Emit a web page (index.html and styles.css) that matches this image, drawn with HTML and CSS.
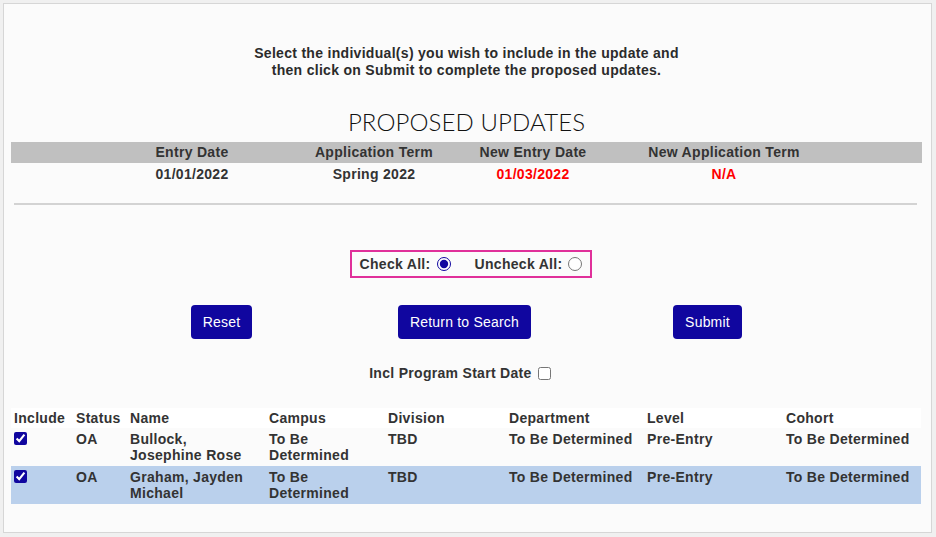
FILE: index.html
```html
<!DOCTYPE html>
<html>
<head>
<meta charset="utf-8">
<link rel="stylesheet" href="styles.css">
</head>
<body>
<div class="panel">
  <p class="intro">Select the individual(s) you wish to include in the update and<br>then click on Submit to complete the proposed updates.</p>
  <h1 class="title">PROPOSED UPDATES</h1>
  <div class="summary">
    <div class="summary-head">
      <span></span><span>Entry Date</span><span>Application Term</span><span>New Entry Date</span><span>New Application Term</span>
    </div>
    <div class="summary-row">
      <span></span><span>01/01/2022</span><span>Spring 2022</span><span class="red">01/03/2022</span><span class="red">N/A</span>
    </div>
  </div>
  <hr class="rule">
  <div class="check-wrap">
    <div class="check-box">
      <label class="opt">Check All: <input type="radio" name="ca" checked></label>
      <label class="opt">Uncheck All: <input type="radio" name="ca"></label>
    </div>
  </div>
  <div class="buttons">
    <button class="btn">Reset</button>
    <button class="btn">Return to Search</button>
    <button class="btn">Submit</button>
  </div>
  <div class="incl">
    <label>Incl Program Start Date <input type="checkbox"></label>
  </div>
  <table class="people">
    <colgroup>
      <col style="width:62px"><col style="width:54px"><col style="width:139px"><col style="width:119px"><col style="width:121px"><col style="width:138px"><col style="width:139px"><col style="width:138px">
    </colgroup>
    <thead>
      <tr><th>Include</th><th>Status</th><th>Name</th><th>Campus</th><th>Division</th><th>Department</th><th>Level</th><th>Cohort</th></tr>
    </thead>
    <tbody>
      <tr>
        <td><input type="checkbox" checked></td><td>OA</td><td>Bullock,<br>Josephine Rose</td><td>To Be<br>Determined</td><td>TBD</td><td>To Be Determined</td><td>Pre-Entry</td><td>To Be Determined</td>
      </tr>
      <tr class="sel">
        <td><input type="checkbox" checked></td><td>OA</td><td>Graham, Jayden<br>Michael</td><td>To Be<br>Determined</td><td>TBD</td><td>To Be Determined</td><td>Pre-Entry</td><td>To Be Determined</td>
      </tr>
    </tbody>
  </table>
</div>
</body>
</html>
```

FILE: styles.css
```css
html, body {
  margin: 0;
  padding: 0;
}
body {
  background: #f0f0f0;
  padding: 3px 4px 4px 3px;
  font-family: "Liberation Sans", Arial, sans-serif;
  color: #333;
}
.panel {
  background: #fbfbfb;
  border: 1px solid #d6d6d6;
  padding: 0 9px 27px 7px;
  height: 530px;
  box-sizing: border-box;
}
.intro {
  margin: 41px 0 0;
  text-align: center;
  font-size: 14px;
  line-height: 17px;
  font-weight: bold;
  letter-spacing: 0.3px;
  color: #2b2b2b;
}
.title {
  margin: 29px 0 6px;
  text-align: center;
  font-family: Lato, "Liberation Sans", sans-serif;
  font-weight: 300;
  font-size: 24px;
  line-height: 28px;
  letter-spacing: 0.1px;
  color: #111;
}
.summary-head, .summary-row {
  display: grid;
  grid-template-columns: 90px 182px 182px 136px 246px 1fr;
  font-size: 14px;
  font-weight: bold;
  letter-spacing: 0.3px;
  text-align: center;
}
.summary-head {
  background: #c0c0c0;
  height: 21px;
  line-height: 21px;
}
.summary-row {
  height: 22px;
  line-height: 22px;
}
.red {
  color: #ff0000;
}
.rule {
  margin: 18px 5px 0 3px;
  border: 0;
  height: 2px;
  background: #d3d3d3;
}
.check-wrap {
  display: flex;
  justify-content: center;
  margin-top: 45px;
  padding-left: 9px;
}
.check-box {
  display: flex;
  gap: 24px;
  align-items: center;
  border: 2px solid #e0309a;
  height: 24px;
  padding: 0 8px 0 8px;
  font-size: 14px;
  font-weight: bold;
  letter-spacing: 0.3px;
}
.opt {
  display: flex;
  align-items: center;
}
.opt input {
  margin: 0 0 0 6px;
  width: 14px;
  height: 14px;
  accent-color: #10069f;
}
.buttons {
  display: grid;
  grid-template-columns: 243px 243px 243px;
  justify-content: center;
  justify-items: center;
  margin-top: 27px;
  padding-right: 4px;
}
.btn {
  background: #10069f;
  color: #fff;
  border: 0;
  border-radius: 4px;
  height: 34px;
  padding: 0 12px;
  font-family: "Liberation Sans", Arial, sans-serif;
  font-size: 14px;
  letter-spacing: 0.2px;
}
.incl {
  text-align: center;
  margin-top: 25px;
  font-size: 14px;
  font-weight: bold;
  letter-spacing: 0.3px;
  line-height: 18px;
  padding-right: 13px;
}
.incl input {
  margin: 0 0 0 2px;
  width: 13px;
  height: 13px;
  vertical-align: -2px;
}
.people {
  margin-top: 26px;
  width: 910px;
  border-collapse: collapse;
  table-layout: fixed;
  font-size: 14px;
  font-weight: bold;
  letter-spacing: 0.3px;
}
.people th {
  background: #fff;
  text-align: left;
  height: 20px;
  padding: 0 3px;
  line-height: 20px;
}
.people td {
  vertical-align: top;
  padding: 3px 3px 3px;
  line-height: 16px;
  height: 32px;
}
.people tr.sel td {
  background: #bad0ec;
}
.people td input {
  margin: 1px 0 0 0;
  width: 13px;
  height: 13px;
  accent-color: #10069f;
}
```
